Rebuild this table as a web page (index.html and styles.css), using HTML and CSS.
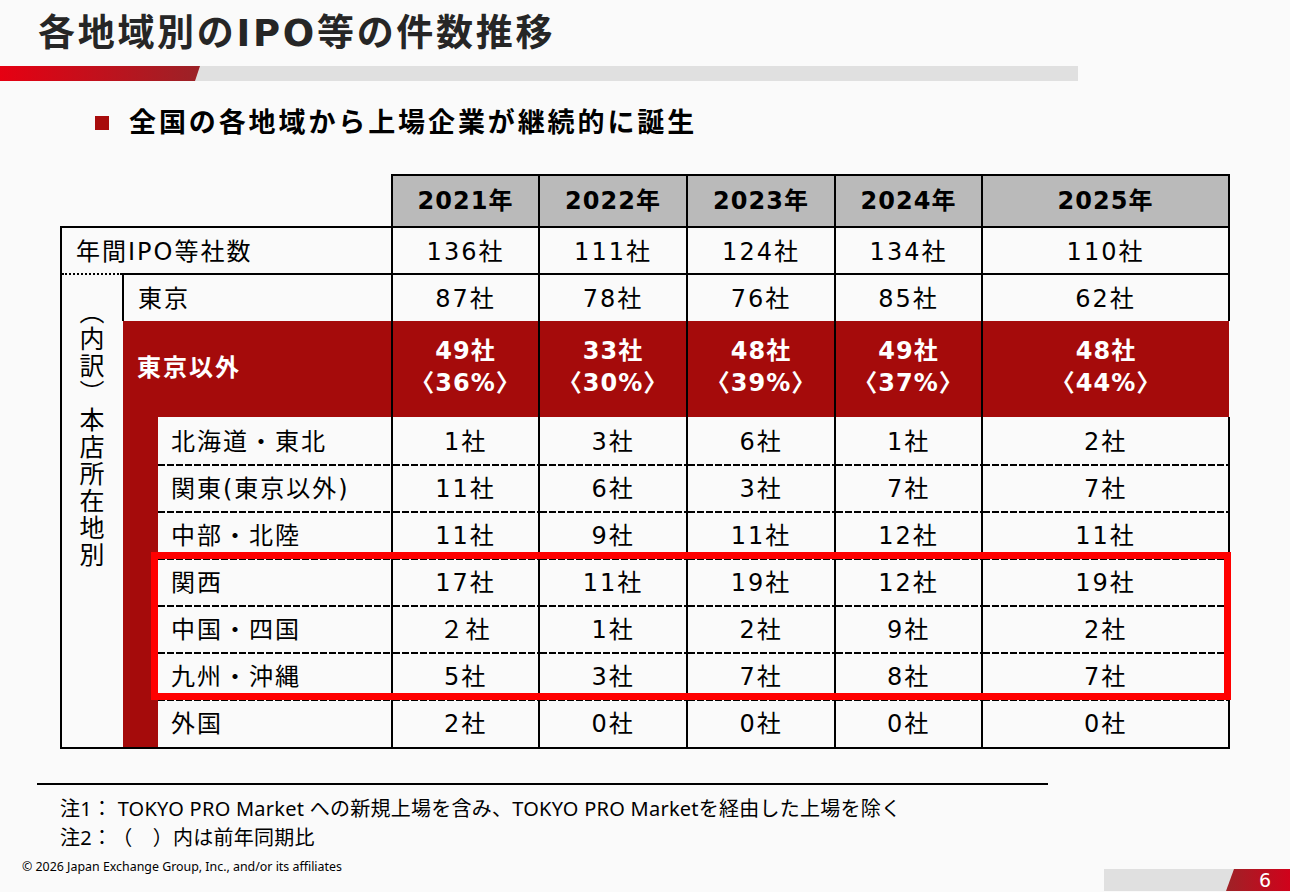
FILE: index.html
```html
<!DOCTYPE html>
<html lang="ja">
<head>
<meta charset="utf-8">
<title>各地域別のIPO等の件数推移</title>
<link rel="stylesheet" href="styles.css">
</head>
<body>
<div class="slide">
  <h1 class="title">各地域別のIPO等の件数推移</h1>
  <div class="rule"><div class="rule-red"></div></div>
  <h2 class="lead"><span class="lead-mark"></span>全国の各地域から上場企業が継続的に誕生</h2>

  <div class="table-wrap">
    <table class="ipo">
      <colgroup>
        <col class="c-a"><col class="c-b"><col class="c-c">
        <col class="c-y1"><col class="c-y2"><col class="c-y2"><col class="c-y1"><col class="c-last">
      </colgroup>
      <thead>
        <tr class="r-head">
          <th colspan="3" class="blank"></th>
          <th class="yr">2021年</th><th class="yr">2022年</th><th class="yr">2023年</th><th class="yr">2024年</th><th class="yr">2025年</th>
        </tr>
      </thead>
      <tbody>
        <tr class="r-total">
          <th colspan="3" class="lbl">年間IPO等社数</th>
          <td>136社</td><td>111社</td><td>124社</td><td>134社</td><td>110社</td>
        </tr>
        <tr class="r-tokyo">
          <th rowspan="9" class="vlabel"><span class="vtext">（内訳）本店所在地別</span></th>
          <th colspan="2" class="lbl">東京</th>
          <td>87社</td><td>78社</td><td>76社</td><td>85社</td><td>62社</td>
        </tr>
        <tr class="r-other">
          <th colspan="2" class="lbl">東京以外</th>
          <td>49社<br>〈36%〉</td><td>33社<br>〈30%〉</td><td>48社<br>〈39%〉</td><td>49社<br>〈37%〉</td><td>48社<br>〈44%〉</td>
        </tr>
        <tr class="r-sub r-first">
          <th rowspan="7" class="strip"></th>
          <th class="lbl">北海道・東北</th>
          <td>1社</td><td>3社</td><td>6社</td><td>1社</td><td>2社</td>
        </tr>
        <tr class="r-sub">
          <th class="lbl">関東(東京以外)</th>
          <td>11社</td><td>6社</td><td>3社</td><td>7社</td><td>7社</td>
        </tr>
        <tr class="r-sub">
          <th class="lbl">中部・北陸</th>
          <td>11社</td><td>9社</td><td>11社</td><td>12社</td><td>11社</td>
        </tr>
        <tr class="r-sub">
          <th class="lbl">関西</th>
          <td>17社</td><td>11社</td><td>19社</td><td>12社</td><td>19社</td>
        </tr>
        <tr class="r-sub">
          <th class="lbl">中国・四国</th>
          <td>２社</td><td>1社</td><td>2社</td><td>9社</td><td>2社</td>
        </tr>
        <tr class="r-sub">
          <th class="lbl">九州・沖縄</th>
          <td>5社</td><td>3社</td><td>7社</td><td>8社</td><td>7社</td>
        </tr>
        <tr class="r-sub r-last">
          <th class="lbl">外国</th>
          <td>2社</td><td>0社</td><td>0社</td><td>0社</td><td>0社</td>
        </tr>
      </tbody>
    </table>
    <div class="highlight"></div>
  </div>

  <div class="rule-foot"></div>
  <div class="notes">
    <p>注1： TOKYO PRO Market への新規上場を含み、TOKYO PRO Marketを経由した上場を除く</p>
    <p>注2：（　）内は前年同期比</p>
  </div>
  <div class="bottom">
    <p class="copy">© 2026 Japan Exchange Group, Inc., and/or its affiliates</p>
    <div class="page"><span class="page-num">6</span></div>
  </div>
</div>
</body>
</html>
```

FILE: styles.css
```css
* { box-sizing: border-box; }
html, body { margin: 0; padding: 0; }
body {
  background: #fafafa;
  color: #000;
  font-family: "DejaVu Sans", "Noto Sans CJK JP", sans-serif;
  text-spacing-trim: space-all;
}
p { margin: 0; }

.slide {
  width: 1290px;
  height: 892px;
  overflow: hidden;
  position: relative;
}

.title {
  margin: 0;
  padding: 12px 0 0 38px;
  height: 56px;
  font-size: 37px;
  line-height: 44px;
  font-weight: 700;
  letter-spacing: 2.7px;
  color: #262626;
  white-space: nowrap;
}

.rule {
  margin-top: 10px;
  width: 1078px;
  height: 15px;
  background: #e0e0e0;
}
.rule-red {
  width: 200px;
  height: 100%;
  background: linear-gradient(90deg, #e60012 0%, #9b2227 100%);
  clip-path: polygon(0 0, 100% 0, calc(100% - 5px) 100%, 0 100%);
}

.lead {
  margin: 24px 0 0 95px;
  height: 36px;
  display: flex;
  align-items: center;
  font-size: 27px;
  line-height: 36px;
  font-weight: 700;
  letter-spacing: 2.9px;
  white-space: nowrap;
}
.lead-mark {
  width: 14px;
  height: 14px;
  background: #a80c0c;
  margin-right: 20px;
  flex: none;
}

.table-wrap {
  position: relative;
  margin: 33px 0 0 60px;
  width: 1168px;
}

.ipo {
  border-collapse: collapse;
  table-layout: fixed;
  width: 1168px;
  font-size: 24px;
  letter-spacing: 2px;
}
.c-a { width: 62px; }
.c-b { width: 35px; }
.c-c { width: 234px; }
.c-y1 { width: 147px; }
.c-y2 { width: 148px; }
.c-last { width: 247px; }

:where(.ipo th, .ipo td) {
  padding: 0 0 3px 0;
  border: none;
  text-align: center;
  vertical-align: middle;
  font-weight: 400;
  white-space: nowrap;
}

.r-head { height: 52px; }
.blank { background: transparent; }
.yr {
  background: #bababa;
  border: 2px solid #000;
  font-weight: 700;
  letter-spacing: 1px;
  padding-bottom: 5px;
}

.r-total { height: 47px; }
.r-total .lbl {
  text-align: left;
  padding-left: 14px;
  border-top: 2px solid #000;
  border-left: 2px solid #000;
  border-right: 2px solid #000;
}
.r-total td { border: 2px solid #000; }

.vlabel {
  vertical-align: top;
  text-align: left;
  padding: 24px 0 0 12px;
  border-left: 2px solid #000;
  border-top: 2px dotted #000;
  border-bottom: 2px solid #000;
}
.vtext {
  display: inline-block;
  writing-mode: vertical-rl;
  font-size: 25px;
  letter-spacing: 2px;
  font-family: "Noto Sans CJK JP", sans-serif;
}

.r-tokyo { height: 47px; }
.r-tokyo .lbl {
  text-align: left;
  padding-left: 14px;
  border-top: 2px solid #000;
  border-left: 2px solid #000;
  border-right: 2px solid #000;
}
.r-tokyo td {
  border-top: 2px solid #000;
  border-left: 2px solid #000;
  border-right: 2px solid #000;
}

.r-other { height: 96px; }
.r-other th, .r-other td {
  background: #a50b0b;
  color: #fff;
  font-weight: 700;
  line-height: 32px;
}
.r-other .lbl {
  text-align: left;
  padding-left: 14px;
}
.r-other td {
  border-left: 2px solid #000;
  border-right: 2px solid #000;
  letter-spacing: 1px;
  padding-bottom: 4px;
}
.r-other td:last-child { border-right: none; }

.strip {
  background: #a50b0b;
  border-bottom: 2px solid #000;
}

.r-sub { height: 47px; }
.r-last { height: 49px; }
.r-sub .lbl {
  text-align: left;
  padding-left: 13px;
  border-right: 2px solid #000;
}
.r-sub td {
  border-left: 2px solid #000;
  border-right: 2px solid #000;
}
.r-sub:not(.r-first) .lbl,
.r-sub:not(.r-first) td {
  background-image: repeating-linear-gradient(90deg, #000 0 7px, transparent 7px 9px);
  background-size: 100% 2px;
  background-repeat: no-repeat;
  background-position: 0 0;
}
.r-last .lbl, .r-last td { border-bottom: 2px solid #000; }

.highlight {
  position: absolute;
  left: 91px;
  top: 378px;
  width: 1080px;
  height: 148px;
  border: 7px solid #ff0000;
  pointer-events: none;
}

.rule-foot {
  margin: 34px 0 0 37px;
  width: 1011px;
  height: 2px;
  background: #000;
}

.notes {
  margin: 9px 0 0 60px;
  font-family: "Noto Sans", "Noto Sans CJK JP", sans-serif;
  font-size: 20px;
  line-height: 29px;
  letter-spacing: 0.25px;
  white-space: nowrap;
}

.bottom {
  display: flex;
  justify-content: space-between;
  align-items: flex-start;
  margin-top: 7px;
}
.copy {
  margin-left: 22px;
  font-family: "Noto Sans", sans-serif;
  font-size: 12.4px;
  line-height: 16px;
  white-space: nowrap;
}
.page {
  margin-top: 10px;
  width: 186px;
  height: 22px;
  background: #e0e0e0;
  display: flex;
  justify-content: flex-end;
}
.page-num {
  width: 64px;
  height: 22px;
  background: linear-gradient(90deg, #9e2227 0%, #d0021b 100%);
  clip-path: polygon(8px 0, 100% 0, 100% 100%, 0 100%);
  color: #fff;
  font-size: 19px;
  line-height: 22px;
  text-align: right;
  padding-right: 19px;
}
```
